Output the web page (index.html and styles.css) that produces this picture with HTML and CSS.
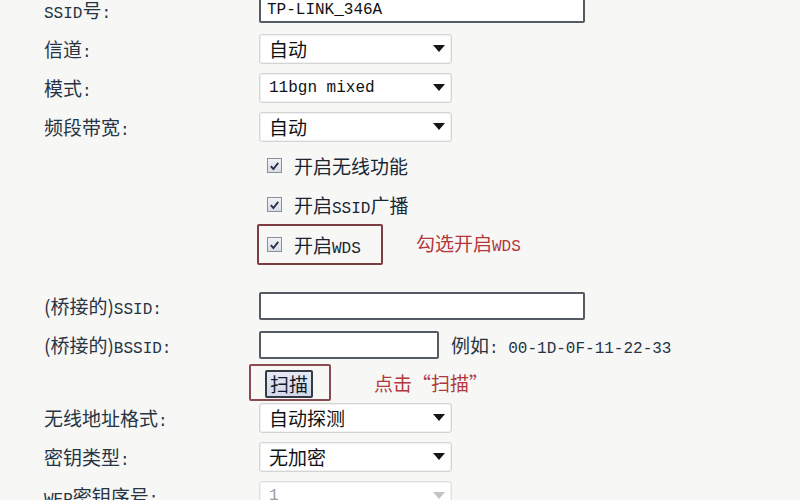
FILE: index.html
```html
<!DOCTYPE html>
<html lang="zh-CN">
<head>
    <meta charset="UTF-8">
    <title>无线基本设置</title>
    <link rel="stylesheet" href="styles.css">
</head>
<body>
    <div class="form">
        <div class="row">
            <div class="lbl"><span class="en">SSID</span>号<span class="en">:</span></div>
            <div class="ctl"><div class="input ssid"><span class="en">TP-LINK_346A</span></div></div>
        </div>
        <div class="row">
            <div class="lbl">信道<span class="en">:</span></div>
            <div class="ctl"><div class="select"><span>自动</span><i class="arrow"></i></div></div>
        </div>
        <div class="row">
            <div class="lbl">模式<span class="en">:</span></div>
            <div class="ctl"><div class="select"><span class="en">11bgn mixed</span><i class="arrow"></i></div></div>
        </div>
        <div class="row">
            <div class="lbl">频段带宽<span class="en">:</span></div>
            <div class="ctl"><div class="select"><span>自动</span><i class="arrow"></i></div></div>
        </div>
        <div class="row">
            <div class="lbl"></div>
            <div class="ctl"><div class="check"><span class="box"><svg viewBox="0 0 14 14" width="14" height="14"><path d="M3 7.2 L5.8 10.2 L11 3.6" fill="none" stroke="#27304a" stroke-width="2"/></svg></span><span>开启无线功能</span></div></div>
        </div>
        <div class="row">
            <div class="lbl"></div>
            <div class="ctl"><div class="check"><span class="box"><svg viewBox="0 0 14 14" width="14" height="14"><path d="M3 7.2 L5.8 10.2 L11 3.6" fill="none" stroke="#27304a" stroke-width="2"/></svg></span><span>开启<span class="en">SSID</span>广播</span></div></div>
        </div>
        <div class="row">
            <div class="lbl"></div>
            <div class="ctl">
                <div class="check mark"><span class="box"><svg viewBox="0 0 14 14" width="14" height="14"><path d="M3 7.2 L5.8 10.2 L11 3.6" fill="none" stroke="#27304a" stroke-width="2"/></svg></span><span>开启<span class="en">WDS</span></span></div>
                <span class="note wds-note">勾选开启<span class="en">WDS</span></span>
            </div>
        </div>

        <div class="spacer"></div>

        <div class="row">
            <div class="lbl">(桥接的)<span class="en">SSID:</span></div>
            <div class="ctl"><div class="input bridge"></div></div>
        </div>
        <div class="row">
            <div class="lbl">(桥接的)<span class="en">BSSID:</span></div>
            <div class="ctl">
                <div class="input bssid"></div>
                <span class="hint">例如<span class="en">: 00-1D-0F-11-22-33</span></span>
            </div>
        </div>
        <div class="row short">
            <div class="lbl"></div>
            <div class="ctl">
                <div class="scan-box"><button class="btn">扫描</button></div>
                <span class="note scan-note">点击“扫描”</span>
            </div>
        </div>
        <div class="row">
            <div class="lbl">无线地址格式<span class="en">:</span></div>
            <div class="ctl"><div class="select"><span>自动探测</span><i class="arrow"></i></div></div>
        </div>
        <div class="row">
            <div class="lbl">密钥类型<span class="en">:</span></div>
            <div class="ctl"><div class="select"><span>无加密</span><i class="arrow"></i></div></div>
        </div>
        <div class="row">
            <div class="lbl"><span class="en">WEP</span>密钥序号<span class="en">:</span></div>
            <div class="ctl"><div class="select disabled"><span class="en">1</span><i class="arrow"></i></div></div>
        </div>
    </div>
</body>
</html>
```

FILE: styles.css
```css
body {
    margin: 0;
    padding: 0;
    background-color: #f7f7f6;
    font-family: "Noto Sans CJK SC", sans-serif;
    font-size: 19px;
    color: #1b2632;
    overflow: hidden;
}
.form {
    margin-top: -10px;
    padding-left: 44px;
}
.row {
    display: grid;
    grid-template-columns: 215px auto;
    align-items: center;
    height: 39px;
}
.row.short {
    height: 34px;
}
.spacer {
    height: 23px;
}
.lbl {
    color: #263443;
    white-space: nowrap;
}
.ctl {
    display: flex;
    align-items: center;
}
.en {
    font-family: "Liberation Mono", monospace;
    font-size: 16px;
}
.input {
    box-sizing: border-box;
    height: 28px;
    background-color: #fff;
    border: 2px solid #555b62;
    border-radius: 2px;
    display: flex;
    align-items: center;
    padding-left: 6px;
}
.input.ssid {
    width: 326px;
    height: 26px;
    color: #111;
}
.input.bridge {
    width: 326px;
}
.input.bssid {
    width: 180px;
}
.select {
    box-sizing: border-box;
    width: 193px;
    height: 30px;
    background-color: #fff;
    border: 1px solid #d4d4d4;
    border-radius: 3px;
    box-shadow: inset 0 0 0 1px #f1f1f1;
    display: flex;
    align-items: center;
    justify-content: space-between;
    padding: 0 6px 0 9px;
    color: #111;
}
.arrow {
    width: 0;
    height: 0;
    border-left: 6px solid transparent;
    border-right: 6px solid transparent;
    border-top: 7px solid #151515;
}
.select.disabled {
    color: #9a9a9a;
    border-color: #e0e0e0;
}
.select.disabled .arrow {
    border-top-color: #c4c4c4;
}
.check {
    display: flex;
    align-items: center;
    gap: 12px;
    padding-left: 8px;
    color: #1b2632;
    white-space: nowrap;
}
.box {
    box-sizing: border-box;
    width: 15px;
    height: 15px;
    border: 1px solid #8790a0;
    background: linear-gradient(#f1f2f6, #d9dde6);
    display: flex;
    align-items: center;
    justify-content: center;
}
.box svg {
    display: block;
}
.mark {
    box-sizing: border-box;
    width: 126px;
    height: 41px;
    margin-left: -2px;
    border: 2px solid #7e3d42;
    border-radius: 2px;
}
.note {
    color: #b3383c;
    white-space: nowrap;
}
.wds-note {
    margin-left: 33px;
    margin-top: -4px;
}
.hint {
    margin-left: 12px;
    color: #263443;
    white-space: nowrap;
}
.scan-box {
    box-sizing: border-box;
    width: 82px;
    height: 37px;
    margin-left: -10px;
    border: 2px solid #8b4a50;
    border-radius: 2px;
    padding: 2px 0 0 14px;
    display: flex;
    align-items: center;
}
.btn {
    box-sizing: border-box;
    width: 48px;
    height: 28px;
    padding: 0;
    font-family: "Noto Sans CJK SC", sans-serif;
    font-size: 19px;
    line-height: 24px;
    color: #111a28;
    background: linear-gradient(#e6e9f4, #d3d9ea);
    border: 2px solid #333a46;
    border-radius: 2px;
}
.scan-note {
    margin-left: 43px;
}
```
